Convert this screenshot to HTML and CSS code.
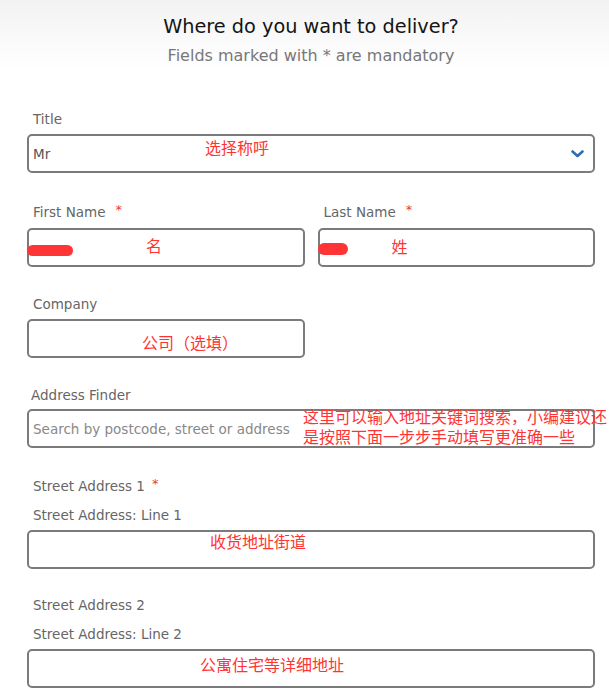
FILE: index.html
```html
<!DOCTYPE html>
<html lang="en">
<head>
<meta charset="utf-8">
<title>Where do you want to deliver?</title>
<link rel="stylesheet" href="styles.css">
</head>
<body>
<div class="page">
  <header class="head">
    <h1 class="head-title">Where do you want to deliver?</h1>
    <p class="head-sub">Fields marked with * are mandatory</p>
  </header>

  <form class="form">
    <div class="field">
      <div class="label">Title</div>
      <div class="box box-select">
        <span class="value">Mr</span>
        <svg class="chevron" width="13" height="8" viewBox="0 0 13 8"><path d="M1.5 1.5 L6.5 6 L11.5 1.5" fill="none" stroke="#2e6db4" stroke-width="2.6" stroke-linecap="round" stroke-linejoin="round"/></svg>
        <span class="note note-title">选择称呼</span>
      </div>
    </div>

    <div class="field-row">
      <div class="field-col">
        <div class="label label-name">First Name<span class="req">*</span></div>
        <div class="box">
          <span class="blob blob-first"></span>
          <span class="note note-first">名</span>
        </div>
      </div>
      <div class="field-col">
        <div class="label label-name">Last Name<span class="req">*</span></div>
        <div class="box">
          <span class="blob blob-last"></span>
          <span class="note note-last">姓</span>
        </div>
      </div>
    </div>

    <div class="field field-half">
      <div class="label">Company</div>
      <div class="box">
        <span class="note note-company">公司（选填）</span>
      </div>
    </div>

    <div class="field">
      <div class="label label-tight">Address Finder</div>
      <div class="box">
        <span class="placeholder">Search by postcode, street or address</span>
        <span class="note note-finder">这里可以输入地址关键词搜索，小编建议还<br>是按照下面一步步手动填写更准确一些</span>
      </div>
    </div>

    <div class="field field-street">
      <div class="label">Street Address 1<span class="req req-street">*</span></div>
      <div class="label label-sub">Street Address: Line 1</div>
      <div class="box">
        <span class="note note-street1">收货地址街道</span>
      </div>
    </div>

    <div class="field field-street">
      <div class="label">Street Address 2</div>
      <div class="label label-sub">Street Address: Line 2</div>
      <div class="box">
        <span class="note note-street2">公寓住宅等详细地址</span>
      </div>
    </div>
  </form>
</div>
</body>
</html>
```

FILE: styles.css
```css
html, body {
  margin: 0;
  padding: 0;
  overflow: hidden;
}

body {
  background: #fff linear-gradient(to bottom, #f2f2f2 0, #fafafa 40px, #fff 70px) no-repeat;
  font-family: "DejaVu Sans", "Noto Sans CJK SC", sans-serif;
  color: #666;
}

.page {
  padding: 0 14px 0 27px;
}

.head {
  text-align: center;
  padding-top: 15px;
}

.head-title {
  margin: 0;
  font-weight: normal;
  font-size: 19.3px;
  line-height: 24px;
  color: #141414;
}

.head-sub {
  margin: 7px 0 0;
  font-size: 16px;
  line-height: 20px;
  color: #777;
}

.form {
  display: flex;
  flex-direction: column;
  padding-top: 45px;
}

.field + .field,
.field + .field-row,
.field-row + .field {
  margin-top: 29px;
}

.field + .field-street {
  margin-top: 28px;
}

.field-row {
  display: grid;
  grid-template-columns: 1fr 1fr;
  column-gap: 13px;
}

.field-half {
  width: calc((100% - 13px) / 2);
}

.label {
  font-size: 13.5px;
  line-height: 16px;
  padding-left: 6px;
  margin-bottom: 7px;
  color: #666;
  white-space: nowrap;
}

.label-name {
  margin-bottom: 8px;
}

.label-tight {
  margin-bottom: 6px;
  padding-left: 4px;
}

.label + .label-sub {
  margin-top: -7px;
  padding-top: 13px;
}

.req {
  color: #e43b3b;
  font-size: 13px;
  margin-left: 10px;
  vertical-align: 3px;
}

.req-street {
  margin-left: 7px;
}

.box {
  position: relative;
  box-sizing: border-box;
  height: 39px;
  border: 2px solid #7b7b7b;
  border-radius: 5px;
  background: #fff;
  display: flex;
  align-items: center;
  padding: 0 4px;
}

.box-select {
  justify-content: space-between;
  padding-right: 9px;
}

.value {
  font-size: 13.5px;
  color: #555;
}

.placeholder {
  font-size: 13.5px;
  color: #888;
  white-space: nowrap;
}

.chevron {
  display: block;
}

.note {
  position: absolute;
  font-family: "Noto Sans CJK SC", sans-serif;
  font-size: 16px;
  line-height: 16px;
  color: #ff3333;
  white-space: nowrap;
}

.note-title { left: 176px; top: 3px; }
.note-first { left: 117px; top: 7px; }
.note-last { left: 72px; top: 8px; }
.note-company { left: 113px; top: 13px; }
.note-finder { left: 274px; top: -5px; line-height: 20px; }
.note-street1 { left: 181px; top: 1px; }
.note-street2 { left: 171px; top: 5px; }

.blob {
  position: absolute;
  background: #ff3535;
  border-radius: 6px;
}

.blob-first { left: -2px; top: 15px; width: 46px; height: 11px; }
.blob-last { left: -2px; top: 13px; width: 30px; height: 12px; }
```
